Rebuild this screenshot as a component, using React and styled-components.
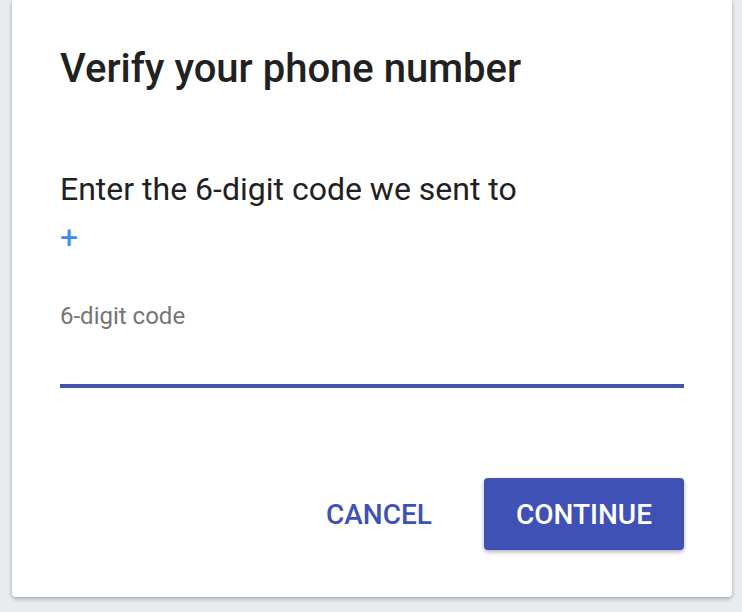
import styled, { createGlobalStyle } from "styled-components";

const GlobalStyle = createGlobalStyle`
  html, body {
    margin: 0;
    padding: 0;
    background: #e9ecef;
    font-family: Roboto, "Liberation Sans", sans-serif;
  }
`;

const Page = styled.div`
  width: 742px;
  height: 612px;
  padding: 0 10px 0 12px;
  box-sizing: border-box;
  overflow: hidden;
`;

const Dialog = styled.div`
  background: #fff;
  border-radius: 0 0 4px 4px;
  box-shadow: 0 2px 4px rgba(0, 0, 0, 0.28), 0 0 2px rgba(0, 0, 0, 0.08);
  padding: 45px 48px 47px;
`;

const Title = styled.h1`
  margin: 0;
  font-size: 40px;
  line-height: 48px;
  font-weight: 500;
  color: #212121;
`;

const Message = styled.p`
  margin: 72px 0 0;
  font-size: 32px;
  line-height: 48px;
  font-weight: 400;
  color: #212121;
`;

const Phone = styled.span`
  display: block;
  color: #4285f4;
`;

const Field = styled.div`
  margin-top: 39px;
  display: flex;
  flex-direction: column;
`;

const Label = styled.label`
  font-size: 24px;
  line-height: 32px;
  color: #757575;
`;

const Input = styled.input`
  height: 52px;
  padding: 0;
  border: none;
  border-bottom: 4px solid #3f51b5;
  outline: none;
  font-family: inherit;
  font-size: 32px;
  color: #212121;
  background: transparent;
`;

const Actions = styled.div`
  margin-top: 90px;
  display: flex;
  justify-content: flex-end;
  gap: 20px;
`;

const Button = styled.button`
  height: 72px;
  padding: 0 32px;
  border: none;
  border-radius: 4px;
  font-family: inherit;
  font-size: 28px;
  font-weight: 500;
  text-transform: uppercase;
  cursor: pointer;
  ${({ $raised }) =>
    $raised
      ? "background: #3f51b5; color: #fff; box-shadow: 0 2px 4px rgba(0, 0, 0, 0.3);"
      : "background: transparent; color: #3f51b5;"}
`;

const App = () => {
  return (
    <>
      <GlobalStyle />
      <Page>
        <Dialog>
          <Title>Verify your phone number</Title>
          <Message>
            Enter the 6-digit code we sent to
            <Phone>+</Phone>
          </Message>
          <Field>
            <Label htmlFor="code">6-digit code</Label>
            <Input id="code" type="text" />
          </Field>
          <Actions>
            <Button>Cancel</Button>
            <Button $raised>Continue</Button>
          </Actions>
        </Dialog>
      </Page>
    </>
  );
};

export default App;
